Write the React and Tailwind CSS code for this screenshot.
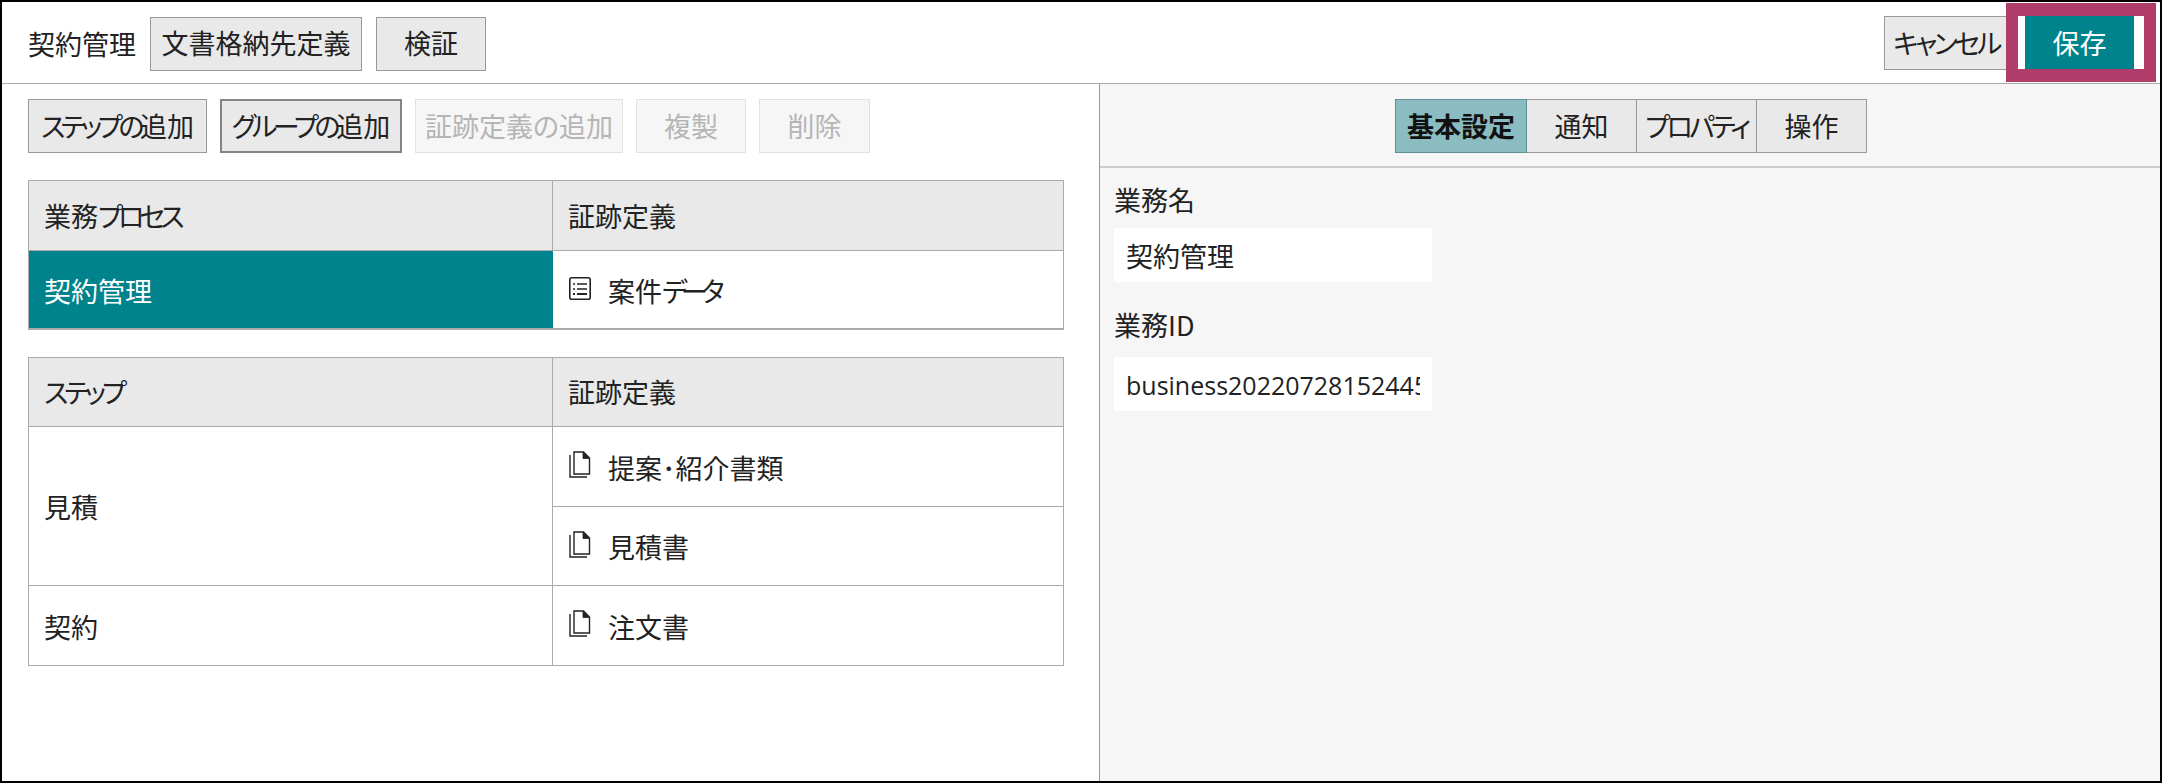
import React from "react";

const font = "font-['Noto_Sans_CJK_JP','Noto_Sans',sans-serif] [font-feature-settings:'palt']";

const ListIcon = () => (
  <svg width="22" height="23" viewBox="0 0 22 23" fill="none" stroke="#222" className="mb-[3px] shrink-0">
    <rect x="0.8" y="0.8" width="20.400" height="21.400" rx="2" strokeWidth="1.6" />
    <path d="M4 7h2M8 7h10M4 12h2M8 12h10" strokeWidth="1.600" />
    <path d="M4 17h2M8 17h10" strokeWidth="2.200" />
  </svg>
);

const DocIcon = () => (
  <svg width="22" height="27" viewBox="0 0 22 27" fill="none" stroke="#222" strokeWidth="1.4" className="mb-[4px] shrink-0">
    <path d="M1 4v22h17" />
    <path d="M5 1h9.500l6 6v16H5z" />
    <path d="M14 1v6.500h6.500z" fill="#222" strokeWidth="0.800" />
  </svg>
);

const Btn = ({ children, width, disabled, strong }) => (
  <button
    className={`h-[54px] shrink-0 whitespace-nowrap text-center text-[27px] ${width} ${
      disabled
        ? "border border-[#e2e2e2] bg-[#f6f6f6] text-[#b5b5b5]"
        : strong
          ? "border-2 border-[#858585] bg-[#e9e9e9] text-[#222]"
          : "border border-[#999] bg-[#e9e9e9] text-[#222]"
    }`}
  >
    {children}
  </button>
);

const Tab = ({ children, width, active }) => (
  <div
    className={`flex h-[54px] items-center justify-center whitespace-nowrap border border-l-0 first:border-l text-[27px] ${width} ${
      active
        ? "border-[#5f8f95] bg-[#8abcc2] font-bold text-[#111]"
        : "border-[#999] bg-[#e9e9e9] text-[#222]"
    }`}
  >
    {children}
  </div>
);

const Evidence = ({ icon, label, className }) => (
  <div className={`flex items-center gap-[17px] pl-[16px] text-[27px] text-[#222] ${className}`}>
    {icon}
    <span className="pt-[3px]">{label}</span>
  </div>
);

const App = () => {
  return (
    <div className={`flex h-[783px] w-[2162px] flex-col overflow-hidden border-2 border-black bg-white ${font}`}>
      <header className="flex h-[82px] shrink-0 items-start justify-between border-b border-[#aaa] pt-[14px]">
        <div className="flex items-center">
          <span className="ml-[26px] mr-[14px] pt-[1px] text-[27px] leading-[54px] text-[#222]">契約管理</span>
          <Btn width="w-[212px]">文書格納先定義</Btn>
          <div className="w-[14px]" />
          <Btn width="w-[110px]">検証</Btn>
        </div>
        <div className="relative mr-[16px] flex">
          <Btn width="w-[134px] pr-[10px]"><span className="tracking-[-3.3px]">キャンセル</span></Btn>
          <div className="w-[7px] bg-white" />
          <button className="h-[54px] w-[109px] bg-[#00838d] text-[27px] text-white">保存</button>
          <div className="w-[10px] bg-white" />
          {/* callout around the save button */}
          <div className="absolute -top-[13px] left-[122px] h-[79px] w-[150px] border-x-[12px] border-y-[13px] border-[#b03c69]" />
        </div>
      </header>

      <div className="flex min-h-0 flex-1">
        <main className="w-[1098px] shrink-0 border-r border-[#999] pl-[26px] pt-[15px]">
          <div className="flex gap-[13px]">
            <Btn width="w-[179px]"><span className="tracking-[-4.4px]">ステップの</span>追加</Btn>
            <Btn width="w-[182px]" strong><span className="tracking-[-4.2px]">グループの</span>追加</Btn>
            <Btn width="w-[208px]" disabled>証跡定義の追加</Btn>
            <Btn width="w-[110px]" disabled>複製</Btn>
            <Btn width="w-[111px]" disabled>削除</Btn>
          </div>

          <div className="mt-[27px] w-[1036px] border border-b-2 border-[#aaa] text-[27px] text-[#222]">
            <div className="flex h-[70px] border-b border-[#aaa] bg-[#e9e9e9]">
              <div className="flex w-[524px] items-center border-r border-[#aaa] pl-[15px] pt-[1px]">業務<span className="tracking-[-4.8px]">プロセス</span></div>
              <div className="flex items-center pl-[15px] pt-[1px]">証跡定義</div>
            </div>
            <div className="flex h-[77px]">
              <div className="flex w-[524px] items-center bg-[#00838d] pl-[15px] pt-[3px] text-white">契約管理</div>
              <Evidence icon={<ListIcon />} label={<>案件<span className="tracking-[-6.4px]">データ</span></>} />
            </div>
          </div>

          <div className="mt-[27px] w-[1036px] border border-[#aaa] text-[27px] text-[#222]">
            <div className="flex h-[69px] border-b border-[#aaa] bg-[#e9e9e9]">
              <div className="flex w-[524px] items-center border-r border-[#aaa] pl-[15px] pt-[1px]"><span className="tracking-[-4px]">ステップ</span></div>
              <div className="flex items-center pl-[15px] pt-[1px]">証跡定義</div>
            </div>
            <div className="flex h-[159px] border-b border-[#aaa]">
              <div className="flex w-[524px] items-center border-r border-[#aaa] pl-[15px] pt-[3px]">見積</div>
              <div className="flex flex-1 flex-col">
                <Evidence icon={<DocIcon />} label="提案･紹介書類" className="h-[80px] border-b border-[#aaa]" />
                <Evidence icon={<DocIcon />} label="見積書" className="flex-1" />
              </div>
            </div>
            <div className="flex h-[79px]">
              <div className="flex w-[524px] items-center border-r border-[#aaa] pl-[15px] pt-[3px]">契約</div>
              <Evidence icon={<DocIcon />} label="注文書" />
            </div>
          </div>
        </main>

        <aside className="flex-1 bg-[#f6f6f6]">
          <div className="flex h-[84px] justify-center border-b-2 border-[#ccc] pl-[2px] pt-[15px]">
            <Tab width="w-[132px]" active>基本設定</Tab>
            <Tab width="w-[110px]">通知</Tab>
            <Tab width="w-[120px]"><span className="tracking-[-3.6px]">プロパティ</span></Tab>
            <Tab width="w-[110px]">操作</Tab>
          </div>
          <div className="pl-[14px] text-[27px] text-[#222]">
            <div className="mt-[14px] leading-[36px]">業務名</div>
            <div className="mt-[10px] flex h-[54px] w-[318px] items-center bg-white px-[12px] pt-[2px]">契約管理</div>
            <div className="mt-[25px] leading-[36px]">業務ID</div>
            <div className="mt-[14px] flex h-[54px] w-[318px] items-center bg-white px-[12px] pt-[4px]">
              <span className="block w-full overflow-hidden whitespace-nowrap font-['Open_Sans',sans-serif] text-[25px]">business20220728152445</span>
            </div>
          </div>
        </aside>
      </div>
    </div>
  );
};

export default App;
